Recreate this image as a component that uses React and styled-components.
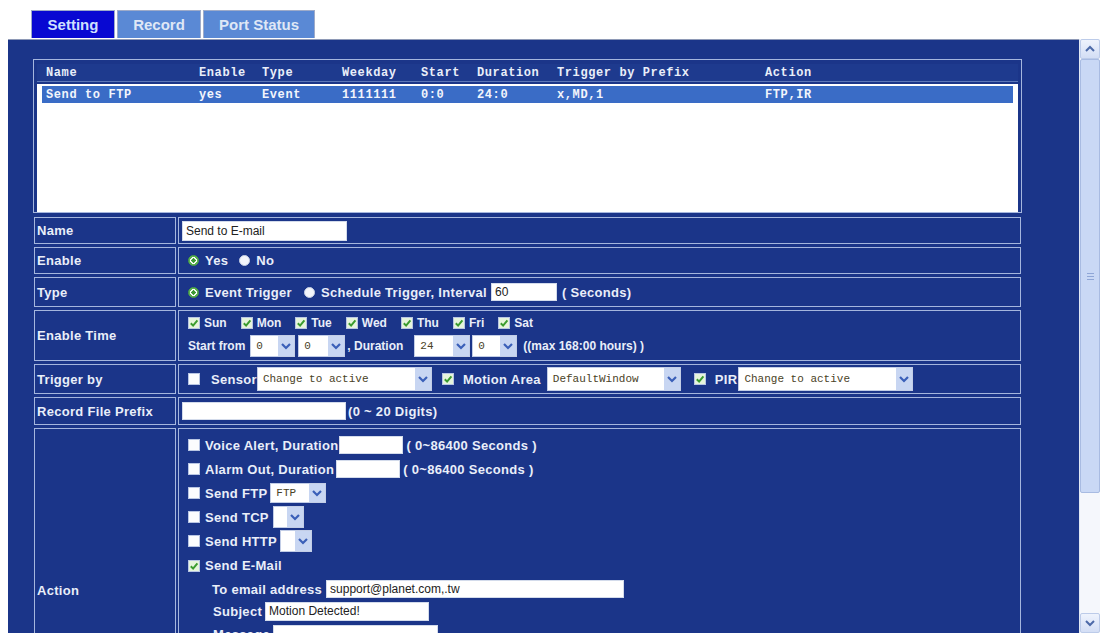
import React from "react"
import styled, { createGlobalStyle } from "styled-components"

const NAVY = "#1b3589"
const LINE = "#a5b6de"
const INK = "#e9eef9"

const GlobalStyle = createGlobalStyle`
  html, body { margin: 0; padding: 0; background: #fff; }
  body { font-family: "Liberation Sans", Arial, sans-serif; }
`

const listCols = "153px 63px 80px 79px 56px 80px 208px 1fr"
const header = ["Name", "Enable", "Type", "Weekday", "Start", "Duration", "Trigger by Prefix", "Action"]
const entry = ["Send to FTP", "yes", "Event", "1111111", "0:0", "24:0", "x,MD,1", "FTP,IR"]
const days = ["Sun", "Mon", "Tue", "Wed", "Thu", "Fri", "Sat"]

function Check({ on, gap, lead }) {
    return (
        <CheckBox $on={on} $gap={gap} $lead={lead}>
            {on && (
                <svg width="10" height="10" viewBox="0 0 10 10">
                    <path d="M1.8 5.2 L4.1 7.6 L8.4 2.3" fill="none" stroke="#3b9c2f" strokeWidth="2" />
                </svg>
            )}
        </CheckBox>
    )
}

function Dropdown({ w, h = 22, value, gap = 0 }) {
    return (
        <SelectBox $w={w} $h={h} $gap={gap}>
            <SelectText $h={h}>{value}</SelectText>
            <SelectArrow>
                <svg width="12" height="10" viewBox="0 0 12 10">
                    <path d="M2 3 L6 7 L10 3" fill="none" stroke="#3a5fb8" strokeWidth="2.2" />
                </svg>
            </SelectArrow>
        </SelectBox>
    )
}

function App() {
    return (
        <Page>
            <GlobalStyle />
            <Tabs>
                <Tab $w={84} $active>Setting</Tab>
                <Tab $w={84}>Record</Tab>
                <Tab $w={112}>Port Status</Tab>
            </Tabs>

            <Frame>
                <Panel>
                    <ListBox>
                        <ListHeader>
                            {header.map((h) => <span key={h}>{h}</span>)}
                        </ListHeader>
                        <ListBody>
                            <ListRow>
                                {entry.map((c, i) => <span key={i}>{c}</span>)}
                            </ListRow>
                        </ListBody>
                    </ListBox>

                    <Form>
                        <Label $h={27}>Name</Label>
                        <Value>
                            <Field $w={165} $h={20}>Send to E-mail</Field>
                        </Value>

                        <Label $h={27}>Enable</Label>
                        <Value>
                            <Radio $on />
                            <Text>Yes</Text>
                            <Radio $gap={11} />
                            <Text>No</Text>
                        </Value>

                        <Label $h={30}>Type</Label>
                        <Value>
                            <Radio $on />
                            <Text>Event Trigger</Text>
                            <Radio $gap={12} />
                            <Text>Schedule Trigger, Interval</Text>
                            <Field $w={66} $h={18} $gap={4}>60</Field>
                            <Text $gap={5}>( Seconds)</Text>
                        </Value>

                        <Label $h={51}>Enable Time</Label>
                        <Value $stack $small>
                            <Line $h={16} $indent={6}>
                                {days.map((d) => (
                                    <Day key={d}>
                                        <Check on gap={4} lead={0} />
                                        <Text>{d}</Text>
                                    </Day>
                                ))}
                            </Line>
                            <Line $h={22} $indent={6}>
                                <Text>Start from</Text>
                                <Dropdown w={45} value="0" gap={5} />
                                <Dropdown w={47} value="0" gap={3} />
                                <Text $gap={2}>, Duration</Text>
                                <Dropdown w={56} value="24" gap={11} />
                                <Dropdown w={45} value="0" gap={2} />
                                <Text $gap={6}>((max 168:00 hours) )</Text>
                            </Line>
                        </Value>

                        <Label $h={30}>Trigger by</Label>
                        <Value>
                            <Check gap={11} />
                            <Text>Sensor</Text>
                            <Dropdown w={175} h={24} value="Change to active" />
                            <Check on gap={10} lead={10} />
                            <Text $gap={-1}>Motion Area</Text>
                            <Dropdown w={134} h={24} value="DefaultWindow" gap={6} />
                            <Check on gap={10} lead={13} />
                            <Text $gap={-1}>PIR</Text>
                            <Dropdown w={175} h={24} value="Change to active" gap={1} />
                        </Value>

                        <Label $h={28}>Record File Prefix</Label>
                        <Value>
                            <Field $w={164} $h={18}></Field>
                            <Text $gap={2}>(0 ~ 20 Digits)</Text>
                        </Value>

                        <Label $h={324}>Action</Label>
                        <Value $stack $top>
                            <Line $h={24}>
                                <Check />
                                <Text>Voice Alert, Duration</Text>
                                <Field $w={64} $h={18} $gap={1}></Field>
                                <Text $gap={3}>( 0~86400 Seconds )</Text>
                            </Line>
                            <Line $h={24}>
                                <Check />
                                <Text>Alarm Out, Duration</Text>
                                <Field $w={64} $h={18} $gap={2}></Field>
                                <Text $gap={3}>( 0~86400 Seconds )</Text>
                            </Line>
                            <Line $h={24}>
                                <Check />
                                <Text>Send FTP</Text>
                                <Dropdown w={56} h={20} value="FTP" gap={3} />
                            </Line>
                            <Line $h={24}>
                                <Check />
                                <Text>Send TCP</Text>
                                <Dropdown w={31} value="" gap={4} />
                            </Line>
                            <Line $h={24}>
                                <Check />
                                <Text>Send HTTP</Text>
                                <Dropdown w={32} value="" gap={3} />
                            </Line>
                            <Line $h={25}>
                                <Check on />
                                <Text>Send E-Mail</Text>
                            </Line>
                            <Line $h={22} $indent={30}>
                                <Text>To email address</Text>
                                <Field $w={298} $h={18} $gap={4}>support@planet.com,.tw</Field>
                            </Line>
                            <Line $h={23} $indent={31}>
                                <Text>Subject</Text>
                                <Field $w={164} $h={19} $gap={3}>Motion Detected!</Field>
                            </Line>
                            <Line $h={23} $indent={31}>
                                <Text>Message</Text>
                                <Field $w={165} $h={19} $gap={3}></Field>
                            </Line>
                        </Value>
                    </Form>
                </Panel>

                <ScrollBar>
                    <ScrollButton>
                        <svg width="12" height="8" viewBox="0 0 12 8">
                            <path d="M2 6 L6 2 L10 6" fill="none" stroke="#4d6aa8" strokeWidth="2" />
                        </svg>
                    </ScrollButton>
                    <Thumb>
                        <Grip />
                    </Thumb>
                    <Track />
                    <ScrollButton>
                        <svg width="12" height="8" viewBox="0 0 12 8">
                            <path d="M2 2 L6 6 L10 2" fill="none" stroke="#4d6aa8" strokeWidth="2" />
                        </svg>
                    </ScrollButton>
                </ScrollBar>
            </Frame>
        </Page>
    )
}

const Page = styled.div`
    width: 1103px;
    height: 637px;
    overflow: hidden;
    background: #fff;
`

const Tabs = styled.div`
    display: flex;
    gap: 2px;
    padding: 10px 0 0 31px;
`

const Tab = styled.div`
    width: ${(p) => p.$w}px;
    height: 28px;
    box-sizing: border-box;
    border: 1px solid #9eabc9;
    border-bottom: none;
    background: ${(p) => (p.$active ? "#0808d2" : "#5a89d5")};
    color: ${(p) => (p.$active ? "#cfe0ff" : "#dfe7f6")};
    font-weight: bold;
    font-size: 15px;
    display: flex;
    align-items: center;
    justify-content: center;
`

const Frame = styled.div`
    display: flex;
    height: 594px;
    margin-top: 1px;
`

const Panel = styled.div`
    width: 1071px;
    margin-left: 8px;
    box-sizing: border-box;
    background: ${NAVY};
    border-top: 1px solid #8e99b6;
    padding: 19px 0 0 25px;
    overflow: hidden;
`

const ListBox = styled.div`
    width: 989px;
    height: 154px;
    box-sizing: border-box;
    border: 1px solid ${LINE};
    padding: 4px 3px 0;
`

const ListHeader = styled.div`
    display: grid;
    grid-template-columns: ${listCols};
    height: 18px;
    align-items: center;
    padding-left: 9px;
    background: #1e3a8e;
    box-shadow: inset 0 -1px 0 #5e78b8;
    color: ${INK};
    font-family: "Liberation Mono", "Courier New", monospace;
    font-weight: bold;
    font-size: 12px;
    letter-spacing: 0.6px;
    white-space: nowrap;
`

const ListBody = styled.div`
    margin-top: 2px;
    height: 128px;
    background: #fff;
    padding: 2px 5px 0;
    box-sizing: border-box;
`

const ListRow = styled(ListHeader)`
    height: 17px;
    padding-left: 4px;
    background: #3a6cc6;
    box-shadow: none;
    color: #f2f5fc;
`

const Form = styled.div`
    display: grid;
    grid-template-columns: 142px 843px;
    column-gap: 2px;
    row-gap: 3px;
    margin: 4px 0 0 1px;
`

const Cell = styled.div`
    box-sizing: border-box;
    border: 1px solid ${LINE};
    color: ${INK};
    font-size: 13px;
    letter-spacing: 0.3px;
    font-weight: bold;
    white-space: nowrap;
`

const Label = styled(Cell)`
    height: ${(p) => p.$h}px;
    display: flex;
    align-items: center;
    padding-left: 2px;
`

const Value = styled(Cell)`
    display: flex;
    flex-direction: ${(p) => (p.$stack ? "column" : "row")};
    align-items: ${(p) => (p.$stack ? "flex-start" : "center")};
    justify-content: ${(p) => (p.$stack && !p.$top ? "center" : "flex-start")};
    padding: ${(p) => (p.$top ? "4px 0 0 3px" : "0 0 0 3px")};
    gap: ${(p) => (p.$stack && !p.$top ? "4px" : "0")};
    font-size: ${(p) => (p.$small ? "12px" : "13px")};
    letter-spacing: ${(p) => (p.$small ? "0" : "0.3px")};
`

const Line = styled.div`
    display: flex;
    align-items: center;
    height: ${(p) => p.$h}px;
    padding-left: ${(p) => p.$indent || 0}px;
`

const Day = styled.div`
    display: flex;
    align-items: center;
    margin-right: 14px;
`

const Text = styled.span`
    margin-left: ${(p) => p.$gap || 0}px;
    color: ${INK};
    font-weight: bold;
`

const CheckBox = styled.span`
    display: inline-flex;
    align-items: center;
    justify-content: center;
    flex-shrink: 0;
    width: 12px;
    height: 12px;
    box-sizing: border-box;
    margin: 0 ${(p) => (p.$gap !== undefined ? p.$gap : 5)}px 0 ${(p) => (p.$lead !== undefined ? p.$lead : 6)}px;
    border: 1px solid #b8c5e3;
    background: ${(p) => (p.$on ? "#e6f4dc" : "#fbfcfe")};
`

const Radio = styled.span`
    flex-shrink: 0;
    width: 11px;
    height: 11px;
    border-radius: 50%;
    margin: 0 6px 0 ${(p) => (p.$gap || 6)}px;
    box-sizing: border-box;
    background: ${(p) =>
        p.$on
            ? "radial-gradient(circle, #3c9a33 0 2px, #ffffff 2.3px 3.2px, #5db352 3.5px)"
            : "#f3f5fb"};
    border: 1px solid ${(p) => (p.$on ? "#4ea445" : "#c6cfe4")};
`

const Field = styled.div`
    width: ${(p) => p.$w}px;
    height: ${(p) => p.$h}px;
    margin-left: ${(p) => p.$gap || 0}px;
    box-sizing: border-box;
    flex-shrink: 0;
    background: #fff;
    border: 1px solid #d3dbeb;
    padding: 0 3px;
    color: #222;
    font-weight: normal;
    font-size: 12px;
    letter-spacing: 0;
    line-height: ${(p) => p.$h - 2}px;
    overflow: hidden;
`

const SelectBox = styled.div`
    display: inline-flex;
    flex-shrink: 0;
    width: ${(p) => p.$w}px;
    height: ${(p) => p.$h}px;
    margin-left: ${(p) => p.$gap}px;
    box-sizing: border-box;
    background: #fff;
    border: 1px solid #c2cde6;
`

const SelectText = styled.span`
    flex: 1;
    min-width: 0;
    overflow: hidden;
    padding-left: 5px;
    font-family: "Liberation Mono", "Courier New", monospace;
    font-weight: normal;
    font-size: 11px;
    letter-spacing: 0;
    line-height: ${(p) => p.$h - 2}px;
    color: #4a4226;
`

const SelectArrow = styled.span`
    width: 16px;
    flex-shrink: 0;
    display: flex;
    align-items: center;
    justify-content: center;
    background: #c8d6f2;
`

const ScrollBar = styled.div`
    width: 21px;
    display: flex;
    flex-direction: column;
    background: #f5f7fc;
    border-left: 1px solid #e2e8f4;
    box-sizing: border-box;
`

const ScrollButton = styled.div`
    height: 18px;
    flex-shrink: 0;
    display: flex;
    align-items: center;
    justify-content: center;
    background: linear-gradient(#eef3fd, #d3def5);
    border: 1px solid #bccbe9;
    border-radius: 2px;
`

const Thumb = styled.div`
    height: 432px;
    flex-shrink: 0;
    display: flex;
    align-items: center;
    justify-content: center;
    background: #c9d8f5;
    border: 1px solid #a8bbe2;
    border-radius: 2px;
`

const Grip = styled.div`
    width: 7px;
    height: 5px;
    border-top: 1px solid #8fa6d6;
    border-bottom: 1px solid #8fa6d6;
    position: relative;
    &::after {
        content: "";
        position: absolute;
        left: 0;
        right: 0;
        top: 2px;
        border-top: 1px solid #8fa6d6;
    }
`

const Track = styled.div`
    flex: 1;
`

export default App
